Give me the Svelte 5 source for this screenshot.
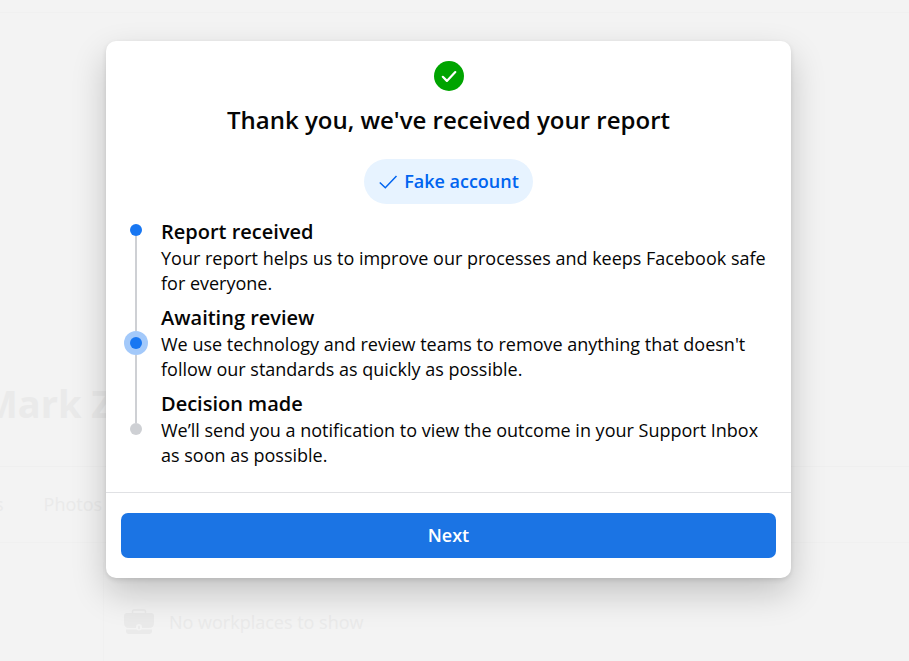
<script>
  const steps = [
    {
      title: 'Report received',
      text: 'Your report helps us to improve our processes and keeps Facebook safe for everyone.'
    },
    {
      title: 'Awaiting review',
      text: "We use technology and review teams to remove anything that doesn't follow our standards as quickly as possible."
    },
    {
      title: 'Decision made',
      text: 'We’ll send you a notification to view the outcome in your Support Inbox as soon as possible.'
    }
  ];

  let fakeAccount = true;
</script>

<div class="screen">
  <div class="page" aria-hidden="true">
    <div class="topbar"></div>
    <div class="profile">
      <p class="name">Mark Z</p>
      <div class="tabs">
        <span>s</span>
        <span>Photos</span>
      </div>
    </div>
    <div class="about">
      <div class="panel">
        <svg class="briefcase" viewBox="0 0 30 26">
          <path d="M8.500 4V2.500Q8.500 1 10 1h10Q21.500 1 21.500 2.500V4" fill="none" stroke="currentColor" stroke-width="1.500" />
          <path d="M3 4h24q3 0 3 3v7q0 5-5 5h-7v-1q0-3-3-3t-3 3v1H5q-5 0-5-5V7q0-3 3-3z" />
          <path d="M14 17.500q1-1.500 2 0v2q-1 1.500-2 0z" />
          <path d="M2 20.500h10.500q2.500 2 5 0H28V22q0 3-3 3H5q-3 0-3-3z" />
        </svg>
        <span>No workplaces to show</span>
      </div>
    </div>
  </div>

  <div class="overlay">
    <div class="dialog" role="dialog" aria-modal="true" aria-labelledby="title">
      <header>
        <svg class="done" viewBox="0 0 30 30" aria-hidden="true">
          <circle cx="15" cy="15" r="15" fill="#00a400" />
          <path d="M8.800 15.800l4.100 4.100 8.400-8.800" fill="none" stroke="#fff" stroke-width="2.200" stroke-linecap="round" stroke-linejoin="round" />
        </svg>
        <h1 id="title">Thank you, we've received your report</h1>
        <button class="tag" aria-pressed={fakeAccount} on:click={() => (fakeAccount = !fakeAccount)}>
          <svg viewBox="0 0 20 20" aria-hidden="true">
            <path d="M1.800 10.500l5.500 5.200L18.500 4" />
          </svg>
          Fake account
        </button>
      </header>

      <div class="progress">
        <div class="track" aria-hidden="true">
          <span class="dot"></span>
          <span class="line long"></span>
          <span class="halo"><span class="dot"></span></span>
          <span class="line short"></span>
          <span class="dot pending"></span>
        </div>
        <ol>
          {#each steps as step}
            <li>
              <h2>{step.title}</h2>
              <p>{step.text}</p>
            </li>
          {/each}
        </ol>
      </div>

      <footer>
        <button class="next">Next</button>
      </footer>
    </div>
  </div>
</div>

<style>
  :global(body) {
    margin: 0;
    background: #f3f3f3;
  }

  .screen {
    position: relative;
    min-height: 100vh;
    overflow: hidden;
    font-family: 'Segoe UI', 'Open Sans', 'Noto Sans', sans-serif;
    font-size: 18px;
    line-height: 25px;
    color: #050505;
  }

  h1,
  h2,
  p,
  ol {
    margin: 0;
    padding: 0;
  }

  button {
    border: none;
    font: inherit;
    font-weight: 600;
    cursor: pointer;
  }

  .page {
    color: #eaeaea;
  }

  .topbar {
    height: 12px;
    border-bottom: 1px solid #f0f0f0;
  }

  .profile {
    padding-top: 366px;
    border-bottom: 1px solid #f0f0f0;
  }

  .name {
    height: 87px;
    margin-left: -18px;
    font-size: 38px;
    font-weight: 700;
    line-height: 48px;
    border-bottom: 1px solid #efefef;
  }

  .tabs {
    display: flex;
    gap: 40px;
    margin-left: -5px;
    line-height: 75px;
    font-weight: 500;
  }

  .about {
    padding: 19px 0 0 103px;
  }

  .panel {
    display: flex;
    align-items: center;
    gap: 15px;
    padding: 47px 20px 26px;
    border-left: 1px solid #f0f0f0;
    font-weight: 500;
  }

  .briefcase {
    width: 30px;
    height: 26px;
    fill: currentColor;
  }

  .overlay {
    position: absolute;
    inset: 0;
    display: flex;
    justify-content: center;
    align-items: flex-start;
    padding: 41px 28px 0 16px;
  }

  .dialog {
    flex: 0 1 685px;
    background: #fff;
    border-radius: 10px;
    box-shadow: 0 15px 35px rgba(0, 0, 0, 0.2), 0 2px 5px rgba(0, 0, 0, 0.1);
  }

  header {
    display: flex;
    flex-direction: column;
    align-items: center;
    padding: 20px 15px 13px;
  }

  .done {
    width: 30px;
    height: 30px;
  }

  h1 {
    margin: 14px 0 24px;
    font-size: 24px;
    font-weight: 600;
    line-height: 30px;
    text-align: center;
  }

  .tag {
    display: flex;
    align-items: center;
    gap: 6px;
    height: 45px;
    padding: 0 14px;
    border-radius: 23px;
    background: #e7f3ff;
    color: #0064f0;
  }

  .tag svg {
    width: 20px;
    height: 20px;
    fill: none;
    stroke: currentColor;
    stroke-width: 1.5;
  }

  .progress {
    display: flex;
    gap: 13px;
    padding: 0 15px 24px 18px;
  }

  .track {
    flex: none;
    display: flex;
    flex-direction: column;
    align-items: center;
    width: 24px;
    padding: 7px 0 33px;
  }

  .dot {
    width: 12px;
    height: 12px;
    border-radius: 50%;
    background: #1877f2;
  }

  .pending {
    background: #ced0d4;
  }

  .halo {
    display: flex;
    align-items: center;
    justify-content: center;
    width: 24px;
    height: 24px;
    border-radius: 50%;
    background: #a3c9fa;
  }

  .line {
    width: 2px;
    background: #ced0d4;
  }

  .long {
    flex: 7;
  }

  .short {
    flex: 5;
  }

  ol {
    display: flex;
    flex-direction: column;
    gap: 7px;
    list-style: none;
  }

  h2 {
    font-size: 20px;
    font-weight: 600;
    line-height: 29px;
  }

  footer {
    padding: 20px 15px;
    border-top: 1px solid #e0e1e4;
  }

  .next {
    display: block;
    width: 100%;
    height: 45px;
    border-radius: 7px;
    background: #1b74e4;
    color: #fff;
  }
</style>
